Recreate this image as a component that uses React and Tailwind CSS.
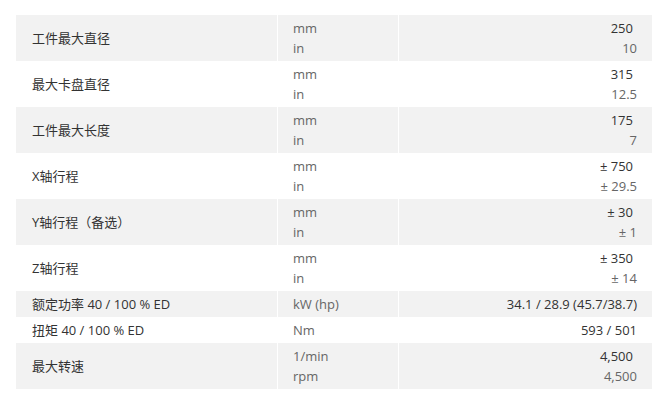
const rows = [
    { label: '工件最大直径', units: ['mm', 'in'], values: ['250', '10'] },
    { label: '最大卡盘直径', units: ['mm', 'in'], values: ['315', '12.5'] },
    { label: '工件最大长度', units: ['mm', 'in'], values: ['175', '7'] },
    { label: 'X轴行程', units: ['mm', 'in'], values: ['± 750', '± 29.5'] },
    { label: 'Y轴行程（备选）', units: ['mm', 'in'], values: ['± 30', '± 1'] },
    { label: 'Z轴行程', units: ['mm', 'in'], values: ['± 350', '± 14'] },
    { label: '额定功率 40 / 100 % ED', units: ['kW (hp)'], values: ['34.1 / 28.9 (45.7/38.7)'] },
    { label: '扭矩 40 / 100 % ED', units: ['Nm'], values: ['593 / 501'] },
    { label: '最大转速', units: ['1/min', 'rpm'], values: ['4,500', '4,500'] },
];

const App = () => {
    return (
        <div
            className="w-[670px] h-[410px] bg-white pt-[15px] pl-[16px]"
            style={{ fontFamily: '"Open Sans", "Noto Sans CJK SC", sans-serif' }}
        >
            <div className="w-[636px] text-[13px] leading-[20px]">
                {rows.map((row, i) => {
                    const double = row.units.length > 1;
                    return (
                        <div
                            key={i}
                            className={`flex ${double ? 'h-[46px]' : 'h-[26px]'} ${i % 2 === 0 ? 'bg-[#f2f2f2]' : 'bg-white'}`}
                        >
                            <div className="w-[262px] border-r border-white flex items-center pl-4 text-[#333]">
                                {row.label}
                            </div>
                            <div className="w-[121px] border-r border-white flex flex-col justify-center pl-[15px] text-[#666]">
                                {row.units.map((u) => (
                                    <div key={u}>{u}</div>
                                ))}
                            </div>
                            <div className="flex-1 flex flex-col justify-center items-end pr-[15px]">
                                {row.values.map((v, j) => (
                                    <div
                                        key={j}
                                        className={
                                            double && j === 0
                                                ? 'text-[#333] pr-1'
                                                : double
                                                ? 'text-[#666]'
                                                : 'text-[#333]'
                                        }
                                    >
                                        {v}
                                    </div>
                                ))}
                            </div>
                        </div>
                    );
                })}
            </div>
        </div>
    );
};

export default App;
